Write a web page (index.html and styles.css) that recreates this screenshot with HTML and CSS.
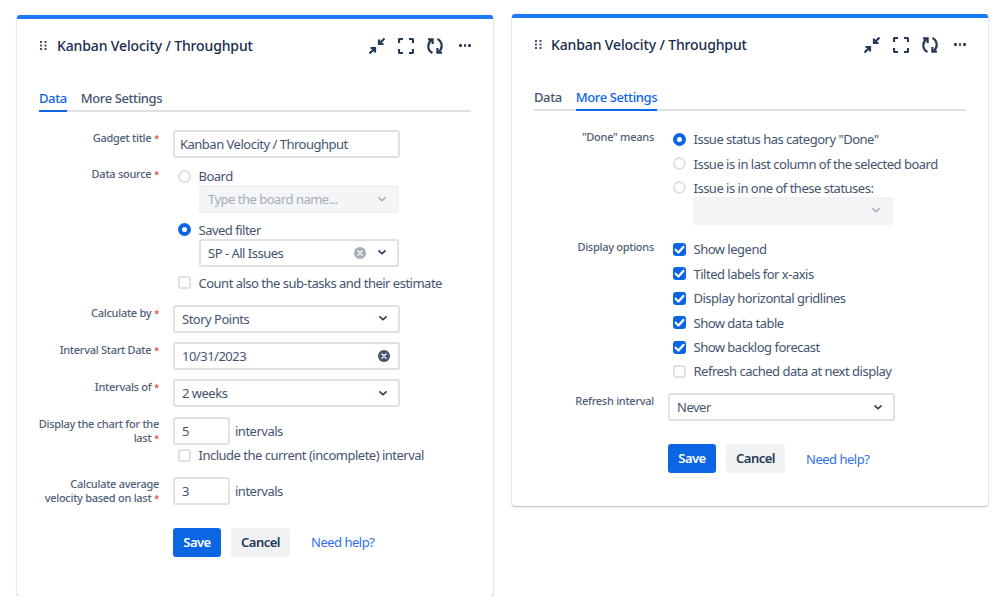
FILE: index.html
```html
<!DOCTYPE html>
<html lang="en">

<head>
  <meta charset="UTF-8" />
  <title>Kanban Velocity / Throughput</title>
  <link rel="stylesheet" href="styles.css">
</head>

<body>
  <svg class="defs" width="0" height="0">
    <symbol id="chev" viewBox="0 0 10 6">
      <path d="M1.2 1l3.8 3.6L8.8 1" fill="none" stroke="currentColor" stroke-width="2" stroke-linecap="round" stroke-linejoin="round" />
    </symbol>
    <symbol id="clear" viewBox="0 0 12 12">
      <circle cx="6" cy="6" r="6" fill="currentColor" />
      <path d="M4 4l4 4M8 4l-4 4" stroke="#fff" stroke-width="1.5" stroke-linecap="round" />
    </symbol>
    <symbol id="tick" viewBox="0 0 10 10">
      <path d="M2 5.200l2.200 2.100L8 3" fill="none" stroke="#fff" stroke-width="1.700" stroke-linecap="round" stroke-linejoin="round" />
    </symbol>
    <symbol id="drag" viewBox="0 0 7 9">
      <g fill="#44546f">
        <rect x="0" y="0" width="2" height="2" /><rect x="4.500" y="0" width="2" height="2" />
        <rect x="0" y="3.500" width="2" height="2" /><rect x="4.500" y="3.500" width="2" height="2" />
        <rect x="0" y="7" width="2" height="2" /><rect x="4.500" y="7" width="2" height="2" />
      </g>
    </symbol>
    <symbol id="shrink" viewBox="0 0 16 16">
      <g fill="none" stroke="currentColor" stroke-width="2.200">
        <path d="M15.500 .5L10 6M10 1.500V6h4.500" />
        <path d="M.5 15.500L6 10M1.500 10H6v4.500" />
      </g>
    </symbol>
    <symbol id="full" viewBox="0 0 16 16">
      <path d="M1 5V2a1 1 0 0 1 1-1h3M11 1h3a1 1 0 0 1 1 1v3M15 11v3a1 1 0 0 1-1 1h-3M5 15H2a1 1 0 0 1-1-1v-3" fill="none" stroke="currentColor" stroke-width="2.200" />
    </symbol>
    <symbol id="reload" viewBox="0 0 16 16">
      <g fill="none" stroke="currentColor" stroke-width="2.200">
        <path d="M5.500 15C2.800 13.600 1.300 11 1.300 8.200S2.300 3.600 4.600 1.800" />
        <path d="M10.500 1c2.700 1.400 4.200 4 4.200 6.800s-1 4.600-3.300 6.400" />
        <path d="M1 1.300h4.600V6" />
        <path d="M15 14.700h-4.600V10" />
      </g>
    </symbol>
  </svg>

  <div class="page">
    <section class="card card-data">
      <div class="card-head">
        <svg class="drag"><use href="#drag" /></svg>
        <h2>Kanban Velocity / Throughput</h2>
        <div class="actions">
          <svg><use href="#shrink" /></svg>
          <svg><use href="#full" /></svg>
          <svg><use href="#reload" /></svg>
          <span class="dots"><i></i><i></i><i></i></span>
        </div>
      </div>
      <div class="tabs">
        <span class="tab active">Data</span>
        <span class="tab">More Settings</span>
      </div>

      <form class="rows">
        <div class="row first">
          <label>Gadget title<b>*</b></label>
          <div class="field pad-s">Kanban Velocity / Throughput</div>
        </div>
        <div class="row tight">
          <label class="down">Data source<b>*</b></label>
          <div>
            <div class="opt"><span class="radio"></span>Board</div>
            <div class="field sub off"><span class="grow">Type the board name...</span><svg class="chev"><use href="#chev" /></svg></div>
            <div class="opt"><span class="radio on"></span>Saved filter</div>
            <div class="field sub"><span class="grow">SP - All Issues</span><svg class="clear light"><use href="#clear" /></svg><svg class="chev"><use href="#chev" /></svg></div>
            <div class="opt"><span class="check"></span>Count also the sub-tasks and their estimate</div>
          </div>
        </div>
        <div class="row">
          <label>Calculate by<b>*</b></label>
          <div class="field"><span class="grow">Story Points</span><svg class="chev"><use href="#chev" /></svg></div>
        </div>
        <div class="row">
          <label>Interval Start Date<b>*</b></label>
          <div class="field"><span class="grow">10/31/2023</span><svg class="clear"><use href="#clear" /></svg></div>
        </div>
        <div class="row">
          <label>Intervals of<b>*</b></label>
          <div class="field"><span class="grow">2 weeks</span><svg class="chev"><use href="#chev" /></svg></div>
        </div>
        <div class="row">
          <label><span class="line">Display the chart for the</span><span class="line">last<b>*</b></span></label>
          <div>
            <div class="inline"><div class="field num">5</div>intervals</div>
            <div class="opt after-inline"><span class="check"></span>Include the current (incomplete) interval</div>
          </div>
        </div>
        <div class="row">
          <label><span class="line">Calculate average</span><span class="line">velocity based on last<b>*</b></span></label>
          <div class="inline"><div class="field num">3</div>intervals</div>
        </div>
        <div class="row btn-row">
          <span></span>
          <div class="buttons">
            <span class="btn save">Save</span>
            <span class="btn cancel">Cancel</span>
            <a class="help" href="#">Need help?</a>
          </div>
        </div>
      </form>
    </section>

    <section class="card card-more">
      <div class="card-head">
        <svg class="drag"><use href="#drag" /></svg>
        <h2>Kanban Velocity / Throughput</h2>
        <div class="actions">
          <svg><use href="#shrink" /></svg>
          <svg><use href="#full" /></svg>
          <svg><use href="#reload" /></svg>
          <span class="dots"><i></i><i></i><i></i></span>
        </div>
      </div>
      <div class="tabs">
        <span class="tab">Data</span>
        <span class="tab active">More Settings</span>
      </div>

      <form class="rows">
        <div class="row first-more">
          <label class="down">"Done" means</label>
          <div>
            <div class="opt"><span class="radio on"></span>Issue status has category "Done"</div>
            <div class="opt"><span class="radio"></span>Issue is in last column of the selected board</div>
            <div class="opt"><span class="radio"></span>Issue is in one of these statuses:</div>
            <div class="field sub off last"><span class="grow"></span><svg class="chev"><use href="#chev" /></svg></div>
          </div>
        </div>
        <div class="row opts-row">
          <label class="down">Display options</label>
          <div>
            <div class="opt"><span class="check on"><svg><use href="#tick" /></svg></span>Show legend</div>
            <div class="opt"><span class="check on"><svg><use href="#tick" /></svg></span>Tilted labels for x-axis</div>
            <div class="opt"><span class="check on"><svg><use href="#tick" /></svg></span>Display horizontal gridlines</div>
            <div class="opt"><span class="check on"><svg><use href="#tick" /></svg></span>Show data table</div>
            <div class="opt"><span class="check on"><svg><use href="#tick" /></svg></span>Show backlog forecast</div>
            <div class="opt"><span class="check"></span>Refresh cached data at next display</div>
          </div>
        </div>
        <div class="row">
          <label>Refresh interval</label>
          <div class="field"><span class="grow">Never</span><svg class="chev"><use href="#chev" /></svg></div>
        </div>
        <div class="row btn-row">
          <span></span>
          <div class="buttons">
            <span class="btn save">Save</span>
            <span class="btn cancel">Cancel</span>
            <a class="help" href="#">Need help?</a>
          </div>
        </div>
      </form>
    </section>
  </div>
</body>

</html>
```

FILE: styles.css
```css
body {
  margin: 0;
  background-color: #fff;
  font-family: "Noto Sans", "Open Sans", sans-serif;
  font-size: 13px;
  letter-spacing: -0.5px;
  color: #44546f;
}

.defs {
  position: absolute;
}

.page {
  display: flex;
  align-items: flex-start;
  gap: 19px;
  padding: 14px 0 0 17px;
}

.card {
  width: 476px;
  box-sizing: border-box;
  padding: 0 22px;
  background: #fff;
  border-top: 4px solid #1d7afc;
  border-radius: 3px;
  box-shadow: 0 1px 2px rgba(9, 30, 66, 0.3), 0 0 1px rgba(9, 30, 66, 0.2);
}

.card-data {
  margin-top: 1px;
  padding-bottom: 39px;
}

.card-more {
  padding-bottom: 33px;
}

.card-head {
  display: flex;
  align-items: center;
  height: 53px;
}

.card-head h2 {
  flex: 1;
  margin: 0;
  font-size: 14px;
  font-weight: 500;
  letter-spacing: -0.13px;
  color: #172b4d;
}

.drag {
  width: 7px;
  height: 9px;
  margin: 0 10px 0 1px;
}

.card-more .drag {
  margin-right: 9px;
}

.actions {
  display: flex;
  align-items: center;
  gap: 13px;
  color: #253858;
}

.actions svg {
  width: 16px;
  height: 16px;
}

.dots {
  display: flex;
  gap: 2px;
  width: 12px;
  margin-left: 3px;
}

.dots i {
  width: 2.7px;
  height: 2.7px;
  border-radius: 50%;
  background: #253858;
}

.tabs {
  display: flex;
  gap: 14px;
  margin-top: 17px;
  border-bottom: 2px solid #dfe1e6;
}

.tab {
  height: 21px;
  margin-bottom: -2px;
  border-bottom: 2px solid transparent;
  font-weight: 500;
  line-height: 18px;
  letter-spacing: -0.4px;
}

.tab.active {
  color: #0c66e4;
  border-bottom-color: #0c66e4;
}

.row {
  display: grid;
  grid-template-columns: 120px 1fr;
  column-gap: 14px;
  margin-top: 9.4px;
}

.row.first {
  margin-top: 18px;
}

.row.first-more {
  margin-top: 16px;
}

.row.tight {
  margin-top: 6px;
}

.row.opts-row {
  margin-top: 12.4px;
}

.row.btn-row {
  margin-top: 22px;
}

.card-more .row.btn-row {
  margin-top: 23px;
}

.row label {
  margin-left: -6px;
  font-size: 11px;
  font-weight: 500;
  line-height: 15px;
  letter-spacing: -0.28px;
  text-align: right;
  color: #505f79;
}

.row label.down {
  padding-top: 2px;
}

.row label .line {
  display: block;
  line-height: 14px;
}

.row label b {
  margin-left: 3px;
  color: #de350b;
  font-size: 9px;
  font-weight: 500;
}

.field {
  display: flex;
  align-items: center;
  box-sizing: border-box;
  width: 227px;
  height: 28px;
  padding: 0 7px;
  background: #fff;
  border: 2px solid #dfe1e6;
  border-radius: 3px;
}

.field.pad-s {
  padding: 0 5px;
}

.grow {
  flex: 1;
}

.chev {
  width: 8px;
  height: 5px;
  margin-right: 4.5px;
  color: #253858;
}

.clear {
  width: 12px;
  height: 12px;
  margin-right: 1px;
  color: #44546f;
}

.clear.light {
  margin-right: 12px;
  color: #a5adba;
}

.field.sub {
  width: 200px;
  margin: -3px 0 4px 26px;
}

.field.sub.off {
  background: #f4f5f7;
  border-color: #f1f2f4;
  color: #a5adba;
}

.field.sub.off .chev {
  color: #a5adba;
}

.field.sub.last {
  margin-top: -3.3px;
  margin-left: 25px;
  margin-bottom: 0;
}

.opt {
  display: flex;
  align-items: center;
  gap: 7.5px;
  height: 24.4px;
  padding-left: 5px;
  white-space: nowrap;
}

.opt.after-inline {
  margin-top: -1.6px;
}

.radio,
.check {
  box-sizing: border-box;
  flex: none;
  width: 13px;
  height: 13px;
  background: #fff;
  border: 2px solid #dfe1e6;
}

.radio {
  border-radius: 50%;
}

.radio.on {
  border: 4px solid #0c66e4;
}

.check {
  border-radius: 3px;
}

.check.on {
  display: flex;
  background: #0c66e4;
  border: 0;
}

.check svg {
  width: 13px;
  height: 13px;
}

.inline {
  display: flex;
  align-items: center;
  gap: 5px;
}

.field.num {
  width: 57px;
}

.buttons {
  display: flex;
  align-items: center;
}

.btn {
  height: 29px;
  border-radius: 3px;
  font-weight: 600;
  line-height: 29px;
  text-align: center;
}

.btn.save {
  width: 48px;
  background: #0c66e4;
  color: #fff;
}

.btn.cancel {
  width: 59px;
  margin-left: 10px;
  background: #f1f2f4;
  color: #253858;
}

.help {
  margin-left: 21px;
  color: #2f6fed;
  text-decoration: none;
}
```
